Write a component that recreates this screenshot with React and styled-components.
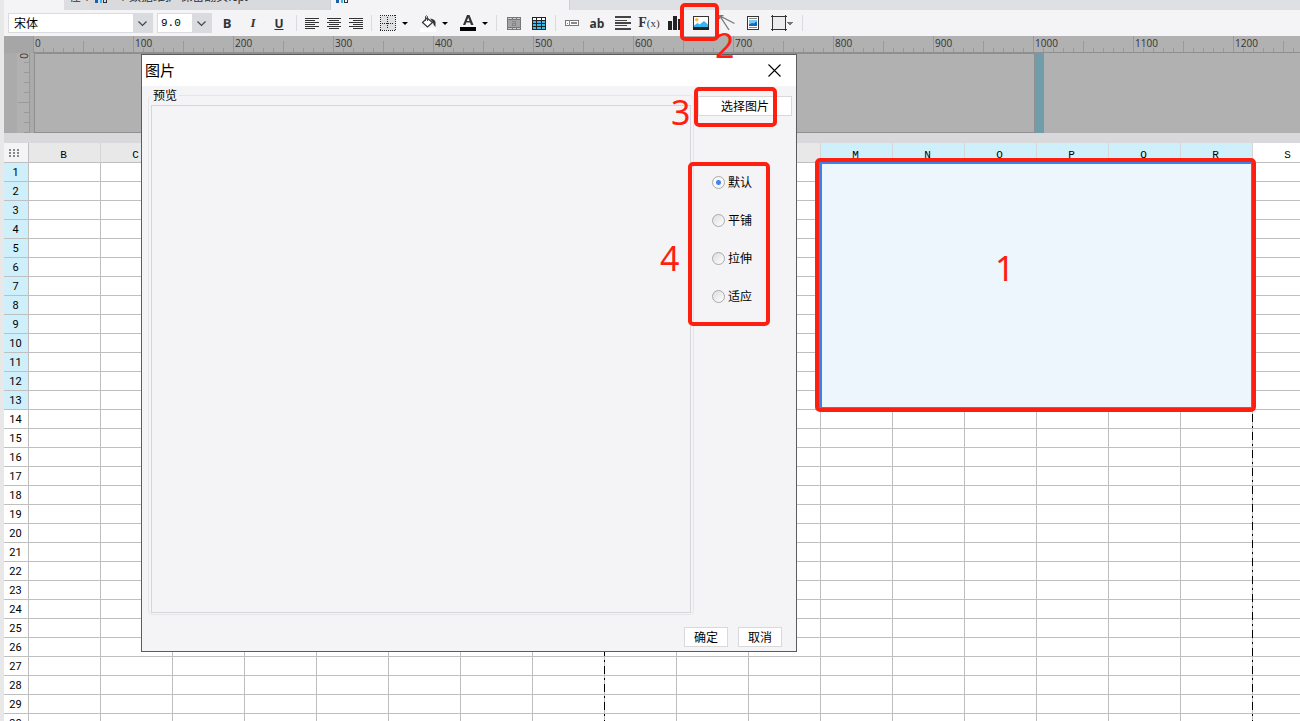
import React, { useState } from 'react';
import styled, { createGlobalStyle } from 'styled-components';

const GlobalStyle = createGlobalStyle`
  * {
    box-sizing: border-box;
  }
  body {
    margin: 0;
    overflow: hidden;
    background: #fff;
  }
  body, button, select, input {
    font-family: 'Liberation Sans', 'Noto Sans CJK SC', sans-serif;
    font-size: 12px;
    color: #000;
  }
`;

const Page = styled.div`
  position: relative;
  height: 100vh;
  overflow: hidden;
  border-left: 4px solid #e8e8e8;
`;

/* ---------- tabs ---------- */

const TabStrip = styled.div`
  display: flex;
  height: 10px;
  overflow: hidden;
  background: #dfe0e3;
`;

const Tab = styled.div`
  display: flex;
  align-items: flex-end;
  flex: none;
  gap: 10px;
  width: ${(p) => p.$width}px;
  padding: 0 5px 6px;
  line-height: 14px;
  white-space: nowrap;
  color: #333;
  background: ${(p) => p.$bg};
  border-right: 1px solid ${(p) => p.$line || '#cdcfd3'};
`;

/* ---------- toolbar ---------- */

const Toolbar = styled.div`
  display: flex;
  align-items: center;
  height: 26px;
  padding-left: 4px;
  background: #f4f4f7;
`;

const SelectBox = styled.label`
  display: flex;
  flex: none;
  width: ${(p) => p.$width}px;
  height: 20px;
  margin-right: ${(p) => p.$gap}px;
  border: 1px solid #d9dbde;
  background: #fff;
  select {
    flex: 1;
    min-width: 0;
    padding: ${(p) => p.$pad || '1px 0 0 5px'};
    border: 0;
    outline: 0;
    appearance: none;
    background: #fff;
    font-family: ${(p) => p.$font || 'inherit'};
    font-size: ${(p) => p.$size || 12}px;
  }
  svg {
    width: 19px;
    height: 18px;
    background: #d9dbde;
  }
`;

const ToolButton = styled.button`
  display: flex;
  flex: none;
  align-items: center;
  justify-content: center;
  width: ${(p) => p.$width || 26}px;
  height: 22px;
  margin: 0 ${(p) => p.$gap || 0}px 0 0;
  padding: 0;
  border: 0;
  background: none;
  color: #333;
  font: ${(p) => p.$font || 'inherit'};
  svg {
    display: block;
    flex: none;
  }
  small {
    font-size: 11px;
    font-weight: 400;
  }
`;

const Separator = styled.span`
  flex: none;
  width: 1px;
  height: 16px;
  margin: 0 4px;
  background: #d9dbde;
`;

/* ---------- rulers and report area ---------- */

const RulerRow = styled.div`
  display: flex;
  height: 17px;
  overflow: hidden;
  background: #b1b1b1;
`;

const RulerCorner = styled.div`
  flex: none;
  width: 29px;
  background: #a6a6a6;
`;

const RulerPart = styled.div`
  flex: none;
  width: 100px;
  padding-left: 2px;
  font: 10px/14px 'Open Sans', sans-serif;
  color: #333;
  background:
    linear-gradient(#8f8f8f, #8f8f8f) 0 100% / 100% 1px no-repeat,
    linear-gradient(#999, #999) 0 0 / 1px 17px no-repeat,
    linear-gradient(#999, #999) 50px 100% / 1px 12px no-repeat,
    repeating-linear-gradient(90deg, #999 0 1px, transparent 1px 10px) 0 100% / 100% 5px no-repeat;
`;

const ReportHead = styled.div`
  display: flex;
  height: 80px;
  background: #b1b1b1;
`;

const VerticalRuler = styled.div`
  flex: none;
  width: 30px;
  padding-left: 13px;
  background: #ababab;
  div {
    height: 80px;
    padding-left: 2px;
    border-right: 1px solid #999;
    background:
      linear-gradient(#999, #999) 100% 49px / 11px 1px no-repeat,
      repeating-linear-gradient(transparent 0 9px, #999 9px 10px) 100% 0 / 5px 100% no-repeat,
      #b1b1b1;
    font: 10px/10px 'Open Sans', sans-serif;
    writing-mode: vertical-rl;
    color: #333;
  }
`;

const ReportPage = styled.div`
  flex: none;
  width: 1001px;
  border: 1px solid #8f8f8f;
`;

const PageHandle = styled.div`
  width: 9px;
  background: #6f9dab;
`;

const Gap = styled.div`
  height: 10px;
  background: #d9d9db;
`;

/* ---------- grid ---------- */

const GridArea = styled.div`
  position: relative;
`;

const Sheet = styled.table`
  width: 1321px;
  table-layout: fixed;
  border-collapse: separate;
  border-spacing: 0;
  th, td {
    padding: 0;
    height: 19px;
    border-right: 1px solid #bfbfbf;
    border-bottom: 1px solid #bfbfbf;
  }
`;

const ColHead = styled.th`
  && {
    height: 20px;
    padding: 4px 2px 0 0;
    border-right-color: #d6d6d9;
  }
  font: 11px/14px 'Liberation Mono', monospace;
  background: ${(p) => (p.$active ? '#cfeffa' : p.$blank ? '#fff' : '#e8e8e8')};
`;

const Corner = styled.td`
  width: 25px;
  background: #f4f4f7;
  svg {
    display: block;
    margin: 2px 0 0 5px;
  }
`;

const RowHead = styled.th`
  && {
    padding: 2px 1px 0 0;
  }
  font: 11px/16px Roboto, sans-serif;
  background: ${(p) => (p.$active ? '#cfeffa' : '#fff')};
`;

const PageBreak = styled.div`
  position: absolute;
  top: 19px;
  bottom: 0;
  left: ${(p) => p.$left}px;
  width: 1px;
  background: repeating-linear-gradient(
    #000 0 8px, #bfbfbf 8px 12px, #000 12px 14px, #bfbfbf 14px 18px
  );
`;

const Selection = styled.div`
  position: absolute;
  left: 815px;
  top: 19px;
  width: 434px;
  height: 247px;
  border: 2px solid #3a83ea;
  border-left-width: 3px;
  background: #edf5fd;
`;

/* ---------- dialog ---------- */

const Dialog = styled.section`
  position: absolute;
  left: 137px;
  top: 54px;
  width: 656px;
  border: 1px solid #5c5c5e;
  background: #f4f4f7;
`;

const DialogTitle = styled.header`
  display: flex;
  align-items: center;
  justify-content: space-between;
  height: 31px;
  padding: 0 15px 0 3px;
  background: #fff;
  h2 {
    margin: 0;
    font-size: 15px;
    font-weight: 400;
    line-height: 30px;
  }
  button {
    padding: 0;
    border: 0;
    background: none;
  }
  svg {
    display: block;
  }
`;

const DialogBody = styled.div`
  display: flex;
  gap: 4px;
  padding: 0 4px 0 6px;
`;

const PreviewBox = styled.fieldset`
  flex: 1;
  min-width: 0;
  height: 529px;
  margin: 0;
  padding: 0 2px 2px;
  border: 1px solid #e6e6e9;
  border-radius: 4px;
  legend {
    padding: 1px 2px 0;
    line-height: 18px;
  }
  div {
    height: 508px;
    border: 1px solid #d6d6da;
  }
`;

const Options = styled.div`
  width: 94px;
  padding-top: 10px;
`;

const PushButton = styled.button`
  width: ${(p) => p.$width || 44}px;
  height: 20px;
  padding: 2px 0 0;
  border: 1px solid #d9d9dc;
  background: #fff;
  line-height: 16px;
`;

const RadioList = styled.div`
  display: grid;
  gap: 20px;
  padding: 57px 0 0 14px;
`;

const RadioLabel = styled.label`
  display: flex;
  align-items: center;
  gap: 3px;
  height: 18px;
  line-height: 16px;
  span {
    padding-top: 2px;
  }
  input {
    width: 13px;
    height: 13px;
    margin: 0;
    appearance: none;
    border: 1px solid #aaa;
    border-radius: 50%;
    background: linear-gradient(135deg, #dcdcdc, #fff);
  }
  input:checked {
    background: radial-gradient(circle, #3c86ee 0 2px, #f8f8fa 3px);
  }
`;

const DialogFooter = styled.footer`
  display: flex;
  justify-content: flex-end;
  gap: 10px;
  padding: 12px 14px 4px;
`;

/* ---------- annotations ---------- */

const MarkBox = styled.div`
  position: absolute;
  left: ${(p) => p.$x}px;
  top: ${(p) => p.$y}px;
  width: ${(p) => p.$w}px;
  height: ${(p) => p.$h}px;
  border: 4px solid #ff1f11;
  border-radius: 5px;
  pointer-events: none;
`;

const MarkNumber = styled.span`
  position: absolute;
  left: ${(p) => p.$x}px;
  top: ${(p) => p.$y}px;
  font: 34px/34px 'Noto Sans', sans-serif;
  color: #ff1f11;
  pointer-events: none;
`;

const columns = 'BCDEFGHIJKLMNOPQRS'.split('');
const rows = Array.from({ length: 30 }, (_, i) => i + 1);
const rulerMarks = Array.from({ length: 13 }, (_, i) => i * 100);
const fitModes = ['默认', '平铺', '拉伸', '适应'];

const marks = [
  { n: 1, box: [811, 158, 441, 254], num: [991, 251] },
  { n: 2, box: [676, 3, 39, 38], num: [711, 28] },
  { n: 3, box: [690, 87, 83, 40], num: [667, 95] },
  { n: 4, box: [684, 162, 82, 164], num: [656, 241] },
];

const Chevron = () => (
  <svg viewBox="0 0 19 18">
    <path d="M5.5 7.5l4 4 4-4" fill="none" stroke="#444" strokeWidth="1.2" />
  </svg>
);

const Caret = ({ label, gap }) => (
  <ToolButton aria-label={label} $width={10} $gap={gap}>
    <svg width="6" height="3" viewBox="0 0 6 3">
      <path d="M0 0h6L3 3z" fill="#000" />
    </svg>
  </ToolButton>
);

const FileIcon = () => (
  <svg width="12" height="8" shapeRendering="crispEdges">
    <path d="M0 0h3v7H0z" fill="#1c5fa8" />
    <path d="M5 2h2v5H5z" fill="#35b6f2" />
    <path d="M8.500 2.500h3v4h-3z" fill="none" stroke="#333" />
  </svg>
);

// x/width of every line of an alignment icon
const AlignIcon = ({ lines, size = 15 }) => (
  <svg width={size} height="13" shapeRendering="crispEdges" fill="#333">
    {lines.map(([x, w], i) => (
      <rect key={i} x={x} y={i * 2 + 1} width={w} height="1" />
    ))}
  </svg>
);

const BorderIcon = () => (
  <svg width="16" height="16" shapeRendering="crispEdges">
    <rect x="1" y="1" width="14" height="14" fill="#dfe0e2" />
    <g fill="none" stroke="#222" strokeDasharray="1 1">
      <path d="M0 .5h16M0 15.5h16M.5 0v16M15.5 0v16" />
      <path d="M2 8.5h12M7.5 2v12" />
    </g>
  </svg>
);

const BucketIcon = () => (
  <svg width="16" height="18" viewBox="0 0 16 18">
    <rect y="14" width="16" height="4" fill="#fff" />
    <path d="M7 4l5.500 4.500-5 4.500L2.500 8.500z" fill="#fff" stroke="#333" strokeWidth="1.2" />
    <path d="M5.5 7V2.5q1-1.5 2 0V7" fill="none" stroke="#444" />
    <path d="M10 4.500q5 .5 5.500 3.500v5q-2-1-2.500-4.500z" fill="#333" />
  </svg>
);

const FontColorIcon = () => (
  <svg width="16" height="16" viewBox="0 0 16 16">
    <path d="M3 10L7 0h2.500l4 10h-2.500l-1-2.500H6.300L5.300 10zM7 6h2.500L8.200 2.500z" fill="#333" fillRule="evenodd" />
    <rect y="12" width="16" height="4" fill="#000" />
  </svg>
);

const MergeIcon = () => (
  <svg width="14" height="13" shapeRendering="crispEdges">
    <rect width="14" height="13" fill="#777" />
    <path d="M1 1h4v1H1zM6 1h3v1H6zM10 1h3v1h-3zM1 11h4v1H1zM6 11h3v1H6zM10 11h3v1h-3z" fill="#ccc" />
    <rect x="1" y="3" width="12" height="7" fill="#a3a3a5" />
    <path d="M5 4.500h3.500v4H5.500v-2H8" fill="none" stroke="#858587" />
  </svg>
);

const TableIcon = () => (
  <svg width="14" height="13" shapeRendering="crispEdges">
    <rect width="14" height="13" fill="#222" />
    {[1, 4, 7, 10].map((y, r) =>
      [1, 5, 10].map((x, c) => (
        <rect
          key={`${x}-${y}`}
          x={x}
          y={y}
          width={c === 1 ? 4 : 3}
          height="2"
          fill={r === 0 ? '#fff' : '#35bdf2'}
        />
      ))
    )}
  </svg>
);

const FieldIcon = () => (
  <svg width="14" height="6" shapeRendering="crispEdges">
    <rect x=".5" y=".5" width="13" height="5" fill="#fff" stroke="#777" />
    <path d="M4.500 0v6M6 2.500h6M6 3.500h6M2 3h1" stroke="#888" />
  </svg>
);

const ChartIcon = () => (
  <svg width="14" height="14" fill="#222" shapeRendering="crispEdges">
    <rect y="5" width="4" height="9" />
    <rect x="5" width="4" height="14" />
    <rect x="10" y="3" width="4" height="11" />
  </svg>
);

const PictureIcon = () => (
  <svg width="16" height="14" viewBox="0 0 16 14">
    <rect x=".5" y=".5" width="15" height="13" fill="#fff" stroke="#333" />
    <circle cx="3.800" cy="3.800" r="1.700" fill="#ffb43c" />
    <path d="M1 11V9.500L4.500 7l2 1.500L11 5l4 3.500V11z" fill="#35b6f2" />
    <rect y="11" width="16" height="3" fill="#222" />
  </svg>
);

const SlashIcon = () => (
  <svg width="16" height="16" viewBox="0 0 16 16" fill="none" stroke="#777" strokeWidth="1.300">
    <path d="M15.500 8.500L1 1l9 14" />
    <path d="M.5 4V.7h4" />
  </svg>
);

const SubReportIcon = () => (
  <svg width="12" height="14" viewBox="0 0 12 14">
    <rect x=".5" y=".5" width="11" height="13" fill="#fff" stroke="#333" />
    <path d="M2 2.500h8M2 11.500h8" stroke="#888" />
    <rect x="2" y="4" width="8" height="6" fill="#6fcdf5" />
    <path d="M2 10V8.500l3-1.500 2 .5 2-2 1 1V10z" fill="#1368b8" />
  </svg>
);

const FrameIcon = () => (
  <svg width="23" height="16" viewBox="0 0 23 16" shapeRendering="crispEdges">
    <rect x="1.500" y="1.500" width="13" height="13" fill="#ececee" stroke="#333" />
    <path d="M0 1.500h16M0 14.500h16M1.500 0v16M14.500 0v16" stroke="#333" />
    <path d="M16 7h6l-3 4z" fill="#777" />
  </svg>
);

const App = () => {
  const [mode, setMode] = useState('默认');

  return (
    <Page>
      <GlobalStyle />
      <TabStrip>
        <Tab $width={60} $bg="#f4f4f7" $line="#f4f4f7" />
        <Tab $width={26} $bg="#dcdde0" $line="#dcdde0">在个</Tab>
        <Tab $width={241} $bg="#d8dade">
          <FileIcon />
          <span>个数据维护 保留翻页.cpt</span>
        </Tab>
        <Tab $width={239} $bg="#f4f4f7">
          <FileIcon />
        </Tab>
      </TabStrip>

      <Toolbar>
        <SelectBox $width={145} $gap={4}>
          <select aria-label="字体">
            <option>宋体</option>
          </select>
          <Chevron />
        </SelectBox>
        <SelectBox $width={55} $gap={2} $size={11} $pad="0 0 0 3px" $font="'Liberation Mono', monospace">
          <select aria-label="字号">
            <option>9.0</option>
          </select>
          <Chevron />
        </SelectBox>
        <ToolButton $font="bold 13px 'Open Sans', sans-serif">B</ToolButton>
        <ToolButton $font="italic bold 13px 'Liberation Serif', serif">I</ToolButton>
        <ToolButton $font="bold 12px 'Open Sans', sans-serif"><u>U</u></ToolButton>
        <Separator />
        <ToolButton aria-label="左对齐" $width={22}>
          <AlignIcon lines={[[0, 14], [0, 10], [0, 14], [0, 10], [0, 14], [0, 10]]} />
        </ToolButton>
        <ToolButton aria-label="居中" $width={22}>
          <AlignIcon lines={[[0, 14], [2, 10], [0, 14], [2, 10], [0, 14], [2, 10]]} />
        </ToolButton>
        <ToolButton aria-label="右对齐" $width={22}>
          <AlignIcon lines={[[0, 14], [4, 10], [0, 14], [4, 10], [0, 14], [4, 10]]} />
        </ToolButton>
        <Separator />
        <ToolButton aria-label="边框" $width={24}><BorderIcon /></ToolButton>
        <Caret label="边框选项" gap={6} />
        <ToolButton aria-label="背景色" $width={24}><BucketIcon /></ToolButton>
        <Caret label="背景色选项" gap={6} />
        <ToolButton aria-label="字体颜色" $width={24}><FontColorIcon /></ToolButton>
        <Caret label="字体颜色选项" gap={2} />
        <Separator />
        <ToolButton aria-label="合并单元格"><MergeIcon /></ToolButton>
        <ToolButton aria-label="表格" $width={24}><TableIcon /></ToolButton>
        <Separator />
        <ToolButton aria-label="控件" $width={24}><FieldIcon /></ToolButton>
        <ToolButton $font="bold 12px 'Open Sans', sans-serif">ab</ToolButton>
        <ToolButton aria-label="富文本">
          <svg width="16" height="14" shapeRendering="crispEdges" fill="#444">
            <path d="M0 0h16v2H0zM0 4h12v1H0zM0 6h16v2H0zM0 9h12v1H0zM0 12h16v2H0z" />
          </svg>
        </ToolButton>
        <ToolButton $font="bold 14px 'Liberation Serif', serif">
          F<small>(x)</small>
        </ToolButton>
        <ToolButton aria-label="图表"><ChartIcon /></ToolButton>
        <ToolButton aria-label="图片"><PictureIcon /></ToolButton>
        <ToolButton aria-label="斜线"><SlashIcon /></ToolButton>
        <ToolButton aria-label="子报表"><SubReportIcon /></ToolButton>
        <ToolButton aria-label="悬浮元素" $width={32}><FrameIcon /></ToolButton>
        <Separator />
      </Toolbar>

      <RulerRow>
        <RulerCorner />
        {rulerMarks.map((m) => (
          <RulerPart key={m}>{m}</RulerPart>
        ))}
      </RulerRow>
      <ReportHead>
        <VerticalRuler>
          <div>0</div>
        </VerticalRuler>
        <ReportPage />
        <PageHandle />
      </ReportHead>
      <Gap />

      <GridArea>
        <Sheet>
          <thead>
            <tr>
              <Corner>
                <svg width="12" height="10" fill="#888" shapeRendering="crispEdges">
                  {[0, 4, 8].map((x) => [0, 3, 6].map((y) => (
                    <rect key={`${x}-${y}`} x={x} y={y} width="2" height="2" />
                  )))}
                </svg>
              </Corner>
              {columns.map((c) => (
                <ColHead key={c} $active={c >= 'M' && c <= 'R'} $blank={c === 'S'}>{c}</ColHead>
              ))}
            </tr>
          </thead>
          <tbody>
            {rows.map((r) => (
              <tr key={r}>
                <RowHead $active={r <= 13}>{r}</RowHead>
                {columns.map((c) => <td key={c} />)}
              </tr>
            ))}
          </tbody>
        </Sheet>
        <PageBreak $left={600} />
        <PageBreak $left={1248} />
        <Selection />
      </GridArea>

      <Dialog role="dialog" aria-labelledby="dialog-title">
        <DialogTitle>
          <h2 id="dialog-title">图片</h2>
          <button aria-label="关闭">
            <svg width="13" height="13" viewBox="0 0 13 13">
              <path d="M.5.5l12 12M12.500.5l-12 12" stroke="#000" strokeWidth="1.100" />
            </svg>
          </button>
        </DialogTitle>
        <DialogBody>
          <PreviewBox>
            <legend>预览</legend>
            <div />
          </PreviewBox>
          <Options>
            <PushButton $width={94}>选择图片</PushButton>
            <RadioList>
              {fitModes.map((m) => (
                <RadioLabel key={m}>
                  <input type="radio" name="fit" checked={mode === m} onChange={() => setMode(m)} />
                  <span>{m}</span>
                </RadioLabel>
              ))}
            </RadioList>
          </Options>
        </DialogBody>
        <DialogFooter>
          <PushButton>确定</PushButton>
          <PushButton>取消</PushButton>
        </DialogFooter>
      </Dialog>

      {marks.map(({ n, box, num }) => (
        <React.Fragment key={n}>
          <MarkBox $x={box[0]} $y={box[1]} $w={box[2]} $h={box[3]} />
          <MarkNumber $x={num[0]} $y={num[1]}>{n}</MarkNumber>
        </React.Fragment>
      ))}
    </Page>
  );
};

export default App;
